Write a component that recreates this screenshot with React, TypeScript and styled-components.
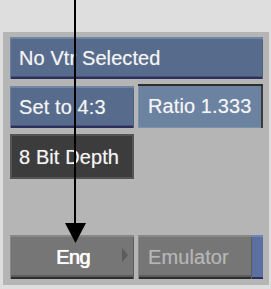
import * as React from 'react';
import styled, { createGlobalStyle } from 'styled-components';

const colors = {
  PAGE: '#dedede',
  PANEL: '#b5b5b5',
  BLUE: '#576c8c',
  BLUE_LIGHT: '#6b82a0',
  NAVY: '#2c2e5c',
  DARK: '#3c3c3c',
  GRAY: '#767676',
  WHITE: '#f4f4f4',
};

const GlobalStyle = createGlobalStyle`
  html, body {
    margin: 0;
    padding: 0;
    background: ${colors.PAGE};
  }
  body {
    font-family: "Liberation Sans", Arial, sans-serif;
  }
`;

const Page = styled.div`
  position: relative;
  width: 271px;
  height: 289px;
  padding: 32px 2px 4px 3px;
  box-sizing: border-box;
`;

const Panel = styled.div`
  width: 266px;
  height: 253px;
  box-sizing: border-box;
  padding: 5px 6px 6px 7px;
  background: ${colors.PANEL};
  display: flex;
  flex-direction: column;
`;

const Row = styled.div<{ top?: number }>`
  display: grid;
  grid-template-columns: 124px 125px;
  column-gap: 4px;
  align-items: end;
  margin-top: ${({ top }) => top || 0}px;
`;

const Spacer = styled.div`
  flex: 1;
`;

const Label = styled.div<{ center?: boolean; muted?: boolean }>`
  display: flex;
  align-items: center;
  justify-content: ${({ center }) => (center ? 'center' : 'flex-start')};
  box-sizing: border-box;
  padding-left: ${({ center }) => (center ? 0 : 9)}px;
  font-size: 20px;
  line-height: 1;
  letter-spacing: 0.1px;
  color: ${({ muted }) => (muted ? '#b6b6b6' : colors.WHITE)};
  text-shadow: 0 0 1px
    ${({ muted }) => (muted ? 'rgba(182,182,182,0.5)' : 'rgba(255,255,255,0.45)')};
  white-space: nowrap;
`;

const BlueButton = styled(Label)<{ wide?: boolean }>`
  height: 42px;
  background: ${colors.BLUE};
  border-radius: 2px 2px 0 0;
  box-shadow: inset 0 2px 0 #6f86a5, inset 1px 0 0 #6a80a0,
    inset -1px 0 0 #4d5f7e, inset 0 -2px 0 ${colors.NAVY},
    inset 0 -3px 0 #4a4f78;
  ${({ wide }) => (wide ? 'width: 253px;' : '')}
`;

const InsetField = styled(Label)`
  height: 44px;
  padding-left: 10px;
  background: ${colors.BLUE_LIGHT};
  box-shadow: inset 0 2px 0 #2e2e2e, inset -2px 0 0 #3a3a3a,
    inset 1px 0 0 #7d92ad, inset 0 -1px 0 #7d92ad;
`;

const DarkField = styled(Label)`
  height: 45px;
  background: ${colors.DARK};
  box-shadow: inset 0 0 0 2px #545454;
`;

const GrayButton = styled(Label)`
  position: relative;
  height: 44px;
  background: ${colors.GRAY};
  box-shadow: inset 0 2px 0 #888, inset 1px 0 0 #888,
    inset -1px 0 0 #5c5c5c, inset 0 -2px 0 #2e2e2e,
    inset 0 -4px 0 #5e5e5e;
`;

const LanguageButton = styled(GrayButton)`
  color: #ffffff;
  padding-left: 2px;
  letter-spacing: -0.6px;
  text-shadow: 0.5px 0 0 #ffffff, 0 0 1px rgba(255, 255, 255, 0.5);
`;

const MenuArrow = styled.span`
  position: absolute;
  right: 6px;
  top: 13px;
  width: 0;
  height: 0;
  border-top: 7px solid transparent;
  border-bottom: 7px solid transparent;
  border-left: 6px solid #5c5c5c;
`;

const Emulator = styled.div`
  display: flex;
  height: 44px;
`;

const EmulatorBody = styled(GrayButton)`
  flex: 1;
  padding-left: 10px;
`;

const EmulatorTab = styled.div`
  width: 11px;
  background: #5b70a0;
  box-shadow: inset 0 2px 0 #7286b2, inset 0 -2px 0 #2c2e5c;
`;

const Pointer = styled.svg`
  position: absolute;
  left: 0;
  top: 0;
  pointer-events: none;
`;

const App: React.FC = () => {
  return (
    <Page>
      <GlobalStyle />
      <Panel>
        <BlueButton wide>No Vtr Selected</BlueButton>
        <Row top={5}>
          <BlueButton>Set to 4:3</BlueButton>
          <InsetField>Ratio 1.333</InsetField>
        </Row>
        <Row top={6}>
          <DarkField>8 Bit Depth</DarkField>
        </Row>
        <Spacer />
        <Row>
          <LanguageButton center>
            Eng
            <MenuArrow />
          </LanguageButton>
          <Emulator>
            <EmulatorBody muted>Emulator</EmulatorBody>
            <EmulatorTab />
          </Emulator>
        </Row>
      </Panel>
      <Pointer width="271" height="289" viewBox="0 0 271 289">
        <rect x="74" y="0" width="2" height="226" fill="#000" />
        <polygon points="65,223 86,223 75.5,243" fill="#000" />
      </Pointer>
    </Page>
  );
};

export default App;
